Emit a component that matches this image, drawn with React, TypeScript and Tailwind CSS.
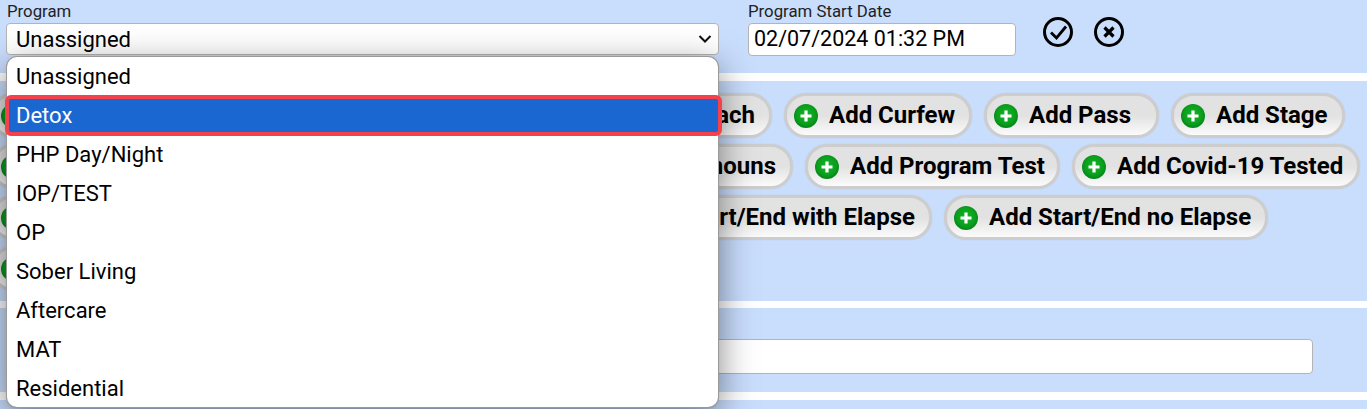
import React from "react";

const font = "font-['Roboto',sans-serif]";

const PlusIcon = () => (
  <svg width="24" height="24" viewBox="0 0 24 24" className="shrink-0">
    <defs>
      <radialGradient id="plusGreen" cx="50%" cy="45%" r="55%">
        <stop offset="0%" stopColor="#13b52a" />
        <stop offset="70%" stopColor="#0a9f1c" />
        <stop offset="100%" stopColor="#07831a" />
      </radialGradient>
    </defs>
    <circle cx="12" cy="12" r="12" fill="url(#plusGreen)" />
    <path d="M12 6.5v11M6.5 12h11" stroke="#fff" strokeWidth="3.2" />
  </svg>
);

// label left out for the buttons that sit fully behind the open dropdown
const AddButton = ({ label, className = "" }: { label?: string; className?: string }) => (
  <div
    className={`flex h-[45px] shrink-0 items-center gap-[11px] rounded-[22px] border-[3px] border-[#cdcdcd] bg-gradient-to-b from-[#e2e2e2] via-[#e2e2e2] to-[#fbfbfb] pl-[7px] pr-[14px] text-[24px] font-bold text-black shadow-[0_0_1px_#b8b8b8] ${className}`}
  >
    <PlusIcon />
    {label && <span className="-mt-[2px] whitespace-nowrap">{label}</span>}
  </div>
);

const options = [
  "Unassigned",
  "Detox",
  "PHP Day/Night",
  "IOP/TEST",
  "OP",
  "Sober Living",
  "Aftercare",
  "MAT",
  "Residential",
];

export default function App() {
  return (
    <div className={`relative h-[409px] w-[1367px] overflow-hidden bg-white ${font}`}>
      {/* program row */}
      <div className="flex h-[73px] bg-[#c9ddfd] pl-[6px] pt-[2px]">
        <div className="w-[713px]">
          <div className="h-[21px] pl-px text-[16.8px] leading-[18px] text-[#222]">Program</div>
          <div className="flex h-[32px] items-center justify-between rounded-[4px] border border-[#b4b4b4] bg-white pl-[9px] pr-[6px] text-[22px] text-black">
            <span>Unassigned</span>
            <svg width="14" height="14" viewBox="0 0 14 14">
              <path d="M1.5 4 7 9.5 12.5 4" fill="none" stroke="#111" strokeWidth="2" />
            </svg>
          </div>
        </div>
        <div className="ml-[29px] w-[268px]">
          <div className="h-[21px] text-[16.8px] leading-[18px] text-[#222]">Program Start Date</div>
          <div className="flex h-[33px] items-center rounded-[4px] border border-[#b4b4b4] bg-white pl-[5px] text-[21.5px] text-black">
            02/07/2024 01:32 PM
          </div>
        </div>
        <div className="ml-[27px] mt-[15px] flex h-[30px] gap-[21px]">
          <svg width="30" height="30" viewBox="0 0 30 30">
            <circle cx="15" cy="15" r="13.5" fill="none" stroke="#000" strokeWidth="3" />
            <path d="M8 15.5l5.5 5.5L23 9.5" fill="none" stroke="#000" strokeWidth="2.8" />
          </svg>
          <svg width="30" height="30" viewBox="0 0 30 30">
            <circle cx="15" cy="15" r="13.5" fill="none" stroke="#000" strokeWidth="3" />
            <path d="M10.5 10.5l9 9M19.5 10.5l-9 9" fill="none" stroke="#000" strokeWidth="3.2" />
          </svg>
        </div>
      </div>

      {/* add buttons */}
      <div className="mt-[8px] flex h-[220px] flex-col gap-[6px] bg-[#c9ddfd] pt-[12px]">
        <div className="-ml-[9px] flex gap-[12px]">
          <AddButton className="w-[599px]" />
          <AddButton label="Add Outreach" className="w-[170px] justify-end" />
          <AddButton label="Add Curfew" className="w-[188px]" />
          <AddButton label="Add Pass" className="w-[175px]" />
          <AddButton label="Add Stage" className="w-[174px]" />
        </div>
        <div className="-ml-[9px] flex gap-[12px]">
          <AddButton className="w-[629px]" />
          <AddButton label="Add Pronouns" className="w-[161px] justify-end" />
          <AddButton label="Add Program Test" className="w-[255px]" />
          <AddButton label="Add Covid-19 Tested" />
        </div>
        <div className="-ml-[9px] flex gap-[12px]">
          <AddButton className="w-[599px]" />
          <AddButton label="Add Start/End with Elapse" className="w-[330px] justify-end" />
          <AddButton label="Add Start/End no Elapse" />
        </div>
        <div className="-ml-[9px] flex gap-[12px]">
          <AddButton className="w-[300px]" />
        </div>
      </div>

      {/* text field */}
      <div className="mt-[7px] h-[84px] bg-[#c9ddfd] pl-[6px] pt-[31px]">
        <div className="h-[35px] w-[1307px] rounded-[4px] border border-[#b4b4b4] bg-white" />
      </div>
      <div className="mt-[8px] h-[9px] bg-[#c9ddfd]" />

      {/* open dropdown */}
      <div className="absolute left-[7px] top-[57px] h-[350px] w-[711px] rounded-[10px] bg-white shadow-[0_1px_2px_#7f8794,0_10px_36px_rgba(0,0,0,0.5)] ring-1 ring-[#9a9a9a]">
        <div className="relative">
          {options.map((option) => (
            <div key={option} className="flex h-[39px] items-center pl-[9px] text-[22px] text-black">
              {option === "Detox" ? (
                <>
                  <div className="absolute left-[-2px] top-[38px] h-[41px] w-[717px] rounded-[6px] border-[4px] border-[#f4414b] bg-[#1a67d2]" />
                  <span className="relative text-white">{option}</span>
                </>
              ) : (
                option
              )}
            </div>
          ))}
        </div>
      </div>
    </div>
  );
}
